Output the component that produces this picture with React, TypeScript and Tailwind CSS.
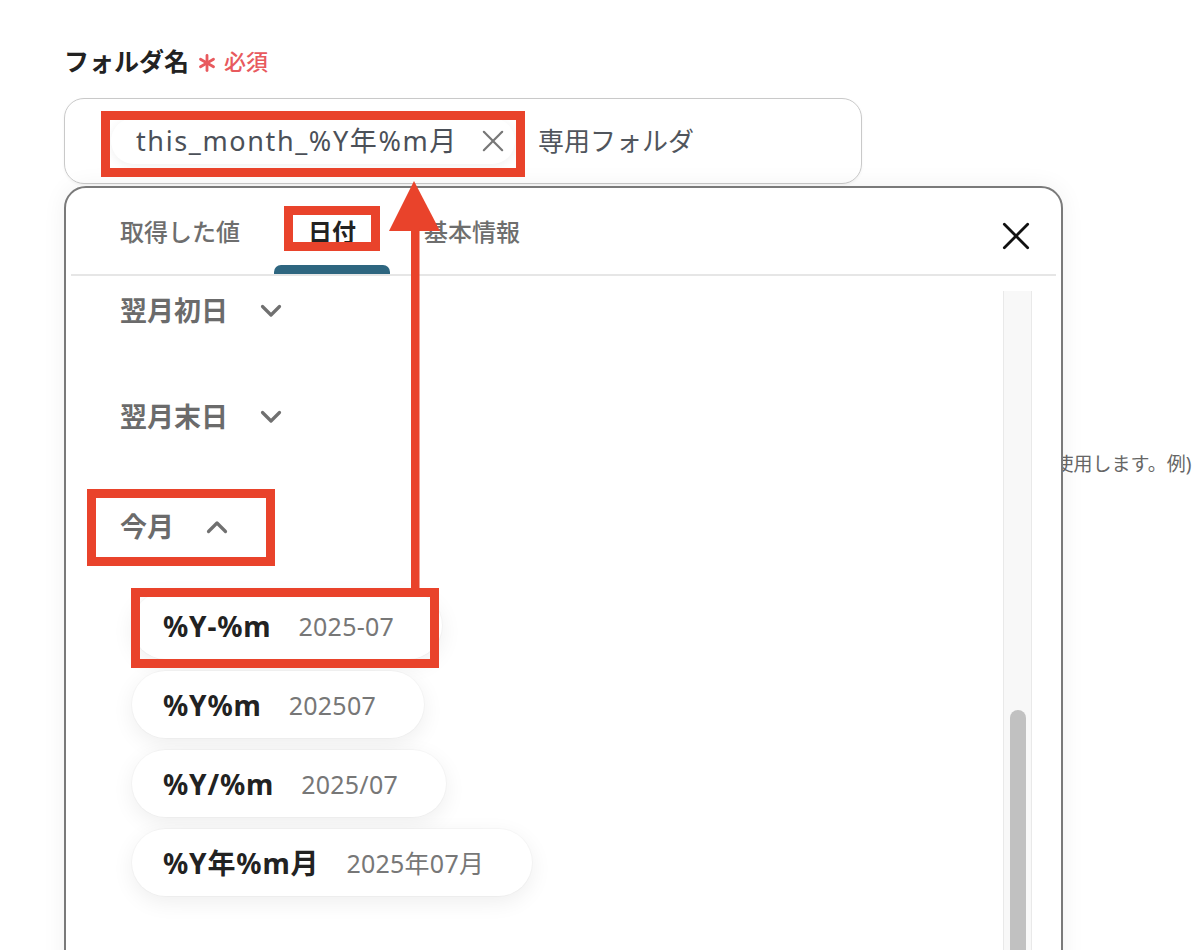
import React from "react"

// フォルダ名入力 + 日付アウトプット選択パネル（注釈つきスクショ）

const RED = "border-[#e9432b]"

function ChevronDown() {
  return (
    <svg width="22" height="14" viewBox="0 0 22 14" fill="none">
      <polyline points="2.5,2.5 11,11 19.5,2.5" stroke="#707070" strokeWidth="3.2" strokeLinecap="round" strokeLinejoin="round" />
    </svg>
  )
}

function ChevronUp() {
  return (
    <svg width="22" height="14" viewBox="0 0 22 14" fill="none">
      <polyline points="2.5,11.5 11,3 19.5,11.5" stroke="#707070" strokeWidth="3.2" strokeLinecap="round" strokeLinejoin="round" />
    </svg>
  )
}

function Cross({ size, color, width }: { size: number; color: string; width: number }) {
  return (
    <svg width={size} height={size} viewBox="0 0 24 24" fill="none">
      <line x1="2" y1="2" x2="22" y2="22" stroke={color} strokeWidth={width} strokeLinecap="round" />
      <line x1="22" y1="2" x2="2" y2="22" stroke={color} strokeWidth={width} strokeLinecap="round" />
    </svg>
  )
}

function Asterisco() {
  return (
    <svg width="18" height="18" viewBox="0 0 18 18" fill="none">
      <line x1="9" y1="1.5" x2="9" y2="16.5" stroke="#e85a5e" strokeWidth="2.8" strokeLinecap="round" />
      <line x1="2.5" y1="5.2" x2="15.5" y2="12.8" stroke="#e85a5e" strokeWidth="2.8" strokeLinecap="round" />
      <line x1="15.5" y1="5.2" x2="2.5" y2="12.8" stroke="#e85a5e" strokeWidth="2.8" strokeLinecap="round" />
    </svg>
  )
}

const formatos = [
  { fmt: "%Y-%m", ej: "2025-07" },
  { fmt: "%Y%m", ej: "202507" },
  { fmt: "%Y/%m", ej: "2025/07" },
  { fmt: "%Y年%m月", ej: "2025年07月" },
]

export default function App() {
  return (
    <div className="relative h-[950px] w-[1200px] overflow-hidden bg-white font-['Noto_Sans','Noto_Sans_CJK_JP',sans-serif]">
      {/* Formulario */}
      <div className="pl-16 pt-[43px]">
        <div className="flex items-center leading-[36px]">
          <span className="text-[25px] font-bold text-[#222]">フォルダ名</span>
          <span className="ml-[9px] mt-[4px]">
            <Asterisco />
          </span>
          <span className="ml-[8px] text-[22px] font-medium text-[#e85a5e]">必須</span>
        </div>

        <div className="mt-[19px] flex h-[86px] w-[798px] items-center gap-[23px] rounded-[20px] border-[1.5px] border-[#c9c9c9] pl-[46px] shadow-[0_1px_3px_rgba(0,0,0,0.05)]">
          <div className="flex h-[46px] items-center gap-[24px] rounded-full bg-white pl-[25px] pr-[11px] shadow-[0_2px_10px_rgba(0,0,0,0.06)]">
            <span className="text-[27px] leading-[36px] tracking-[0.06em] text-[#4b5058]">this_month_%Y年%m月</span>
            <Cross size={22} color="#777" width={2.4} />
          </div>
          <span className="text-[26px] text-[#50555c]">専用フォルダ</span>
        </div>

        <p className="ml-[5px] mt-[268px] whitespace-nowrap text-[19px] leading-[24px] text-[#666]">
          作成するフォルダの名前を入力してください。アウトプットを組み合わせることで、実行ごとに異なるフォルダ名を使用します。例)
        </p>
      </div>

      {/* Panel de selección */}
      <div className="absolute left-[64px] top-[186px] flex h-[800px] w-[999px] flex-col rounded-t-[22px] border-2 border-[#7a7a7a] bg-white shadow-[0_0_24px_rgba(0,0,0,0.06)]">
        <div className="mx-[5px] flex h-[88px] shrink-0 border-b-2 border-[#e6e6e6] pl-[15px] pr-[26px]">
          <div className="flex flex-1">
            <div className="flex flex-col px-[34px] pt-[26px]">
              <span className="text-[24px] font-medium leading-[36px] text-[#6e6e6e]">取得した値</span>
            </div>
            <div className="flex flex-col px-[34px] pt-[26px]">
              <span className="text-[24px] font-bold leading-[36px] text-[#222]">日付</span>
              <span className="-mx-[34px] mt-auto h-[9px] rounded-t-[7px] bg-[#2e6680]" />
            </div>
            <div className="flex flex-col px-[34px] pt-[26px]">
              <span className="text-[24px] font-medium leading-[36px] text-[#6e6e6e]">基本情報</span>
            </div>
          </div>
          <div className="pt-[34px]">
            <Cross size={28} color="#111" width={2.4} />
          </div>
        </div>

        <div className="flex min-h-0 flex-1 overflow-hidden">
          <div className="flex-1 pl-[54px] pt-[18px]">
            <div className="flex h-[34px] items-center gap-[32px]">
              <span className="text-[27px] font-bold leading-[34px] text-[#6b6b6b]">翌月初日</span>
              <ChevronDown />
            </div>
            <div className="mt-[72px] flex h-[34px] items-center gap-[32px]">
              <span className="text-[27px] font-bold leading-[34px] text-[#6b6b6b]">翌月末日</span>
              <ChevronDown />
            </div>
            <div className="mt-[76px] flex h-[34px] items-center gap-[32px]">
              <span className="text-[27px] font-bold leading-[34px] text-[#6b6b6b]">今月</span>
              <ChevronUp />
            </div>

            <div className="ml-[12px] mt-[48px] flex flex-col items-start gap-[12px]">
              {formatos.map((f) => (
                <div
                  key={f.fmt}
                  className="flex h-[67px] items-center gap-[27px] rounded-full bg-white pl-[31px] pr-[48px] shadow-[0_0_0_1px_rgba(0,0,0,0.025),0_6px_22px_rgba(0,0,0,0.07)]"
                >
                  <span className="text-[28px] font-bold leading-[36px] tracking-[0.03em] text-[#222]">{f.fmt}</span>
                  <span className="text-[25px] leading-[36px] tracking-[0.01em] text-[#777]">{f.ej}</span>
                </div>
              ))}
            </div>
          </div>

          <div className="mr-[29px] mt-[15px] flex w-[29px] shrink-0 flex-col border-x border-[#e9e9e9] bg-[#f8f8f8] pt-[419px]">
            <div className="mx-auto h-[400px] w-[16px] shrink-0 rounded-full bg-[#c1c1c1]" />
          </div>
        </div>
      </div>

      {/* Anotaciones */}
      <div className={`absolute left-[101px] top-[111px] h-[66px] w-[424px] border-[9px] ${RED}`} />
      <div className={`absolute left-[284px] top-[206px] h-[45px] w-[96px] border-[9px] ${RED}`} />
      <div className={`absolute left-[87px] top-[489px] h-[77px] w-[188px] border-[9px] ${RED}`} />
      <div className={`absolute left-[131px] top-[588px] h-[80px] w-[308px] border-[9px] ${RED}`} />
      <svg className="pointer-events-none absolute left-0 top-0" width="1200" height="950">
        <polygon points="414,181 389,231 440,231" fill="#e9432b" />
        <rect x="411" y="228" width="8.5" height="362" fill="#e9432b" />
      </svg>
    </div>
  )
}
